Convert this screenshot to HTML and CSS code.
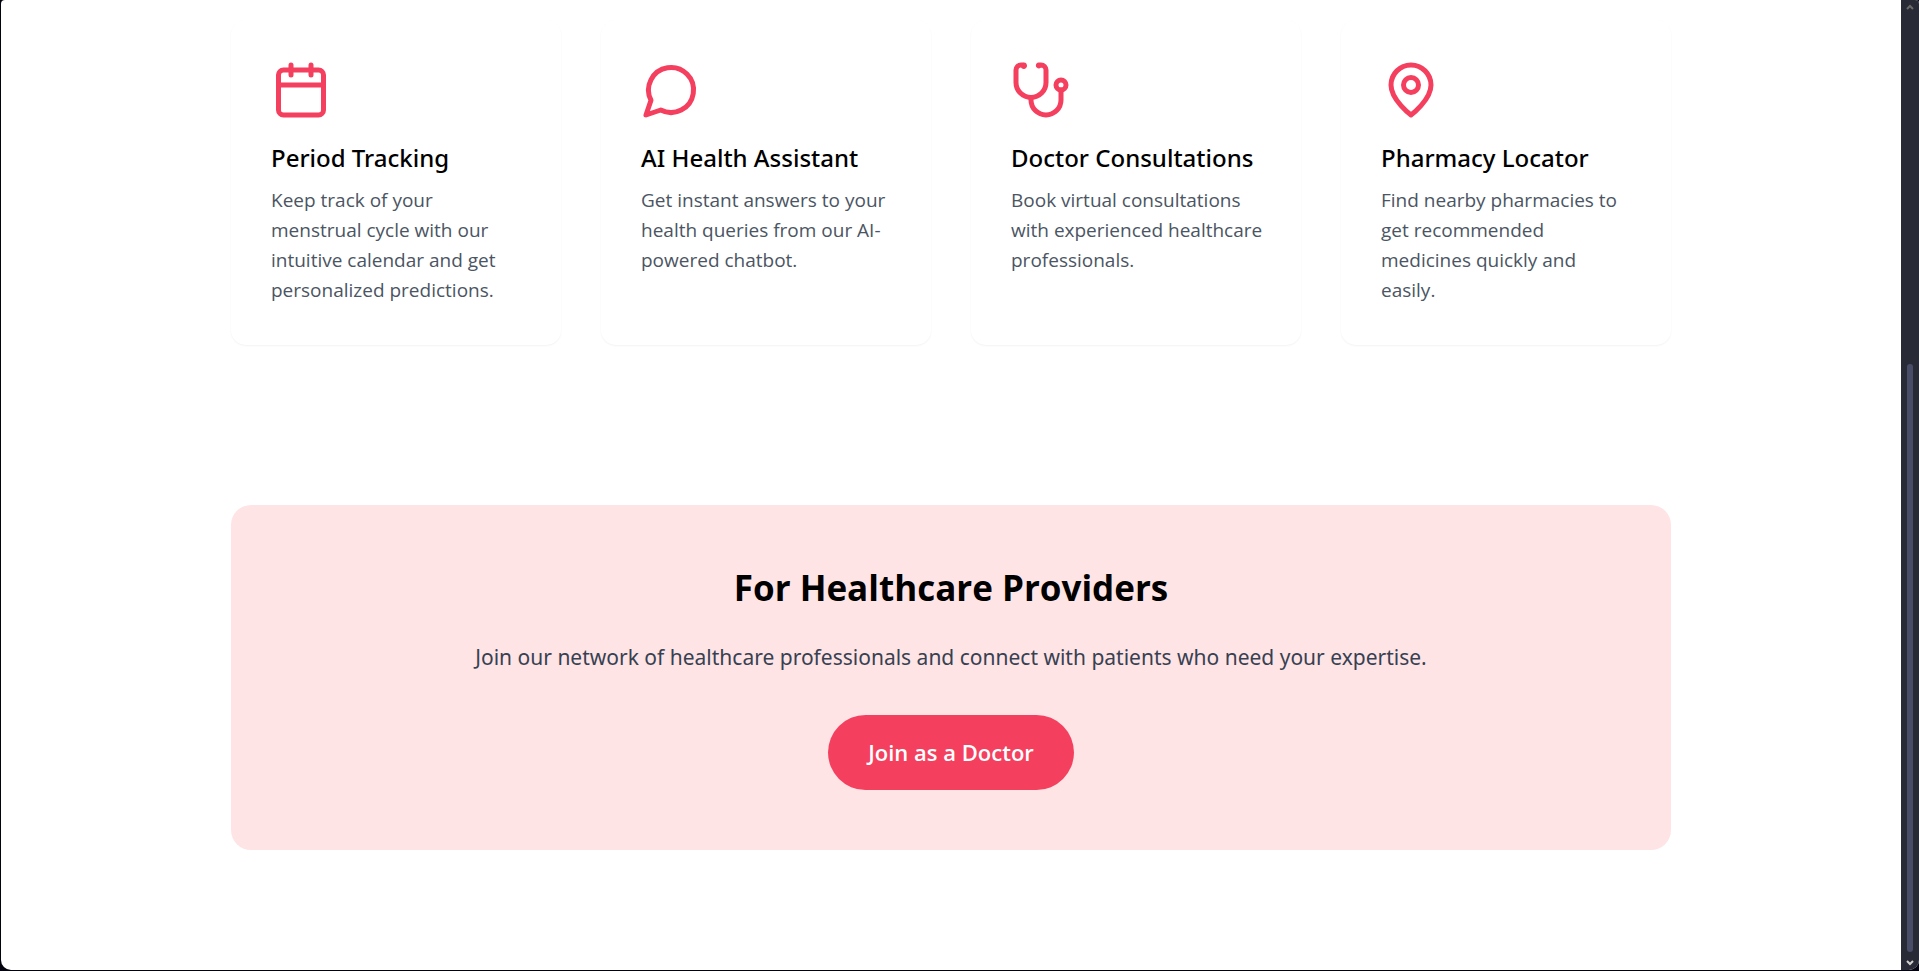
FILE: index.html
```html
<!DOCTYPE html>
<html lang="en">
  <head>
    <meta charset="UTF-8" />
    <meta name="viewport" content="width=device-width, initial-scale=1.0" />
    <title>Women's Health</title>
    <link rel="stylesheet" href="styles.css">
  </head>
  <body>
    <div class="window">
      <main class="page">
        <section class="features">
          <article class="card">
            <svg class="icon" viewBox="0 0 24 24" aria-hidden="true">
              <path d="M8 2v4" />
              <path d="M16 2v4" />
              <rect width="18" height="18" x="3" y="4" rx="2" />
              <path d="M3 10h18" />
            </svg>
            <h3>Period Tracking</h3>
            <p>
              Keep track of your menstrual cycle with our intuitive calendar and
              get personalized predictions.
            </p>
          </article>
          <article class="card">
            <svg class="icon" viewBox="0 0 24 24" aria-hidden="true">
              <path d="M7.9 20A9 9 0 1 0 4 16.1L2 22Z" />
            </svg>
            <h3>AI Health Assistant</h3>
            <p>
              Get instant answers to your health queries from our AI-powered
              chatbot.
            </p>
          </article>
          <article class="card">
            <svg class="icon" viewBox="0 0 24 24" aria-hidden="true">
              <path d="M4.8 2.3A.3.3 0 1 0 5 2H4a2 2 0 0 0-2 2v5a6 6 0 0 0 6 6 6 6 0 0 0 6-6V4a2 2 0 0 0-2-2h-1a.2.2 0 1 0 .3.3" />
              <path d="M8 15v1a6 6 0 0 0 6 6 6 6 0 0 0 6-6v-4" />
              <circle cx="20" cy="10" r="2" />
            </svg>
            <h3>Doctor Consultations</h3>
            <p>
              Book virtual consultations with experienced healthcare
              professionals.
            </p>
          </article>
          <article class="card">
            <svg class="icon" viewBox="0 0 24 24" aria-hidden="true">
              <path d="M20 10c0 6-8 12-8 12s-8-6-8-12a8 8 0 0 1 16 0Z" />
              <circle cx="12" cy="10" r="3" />
            </svg>
            <h3>Pharmacy Locator</h3>
            <p>
              Find nearby pharmacies to get recommended medicines quickly and
              easily.
            </p>
          </article>
        </section>

        <section class="providers">
          <h2>For Healthcare Providers</h2>
          <p>
            Join our network of healthcare professionals and connect with
            patients who need your expertise.
          </p>
          <button type="button" class="btn-join">Join as a Doctor</button>
        </section>
      </main>

      <div class="scrollbar" aria-hidden="true">
        <svg class="arrow arrow-up" viewBox="0 0 8 6">
          <path d="M1 5l3-3 3 3" />
        </svg>
        <div class="track">
          <div class="thumb"></div>
        </div>
        <svg class="arrow" viewBox="0 0 8 6">
          <path d="M1 1l3 3 3-3" />
        </svg>
      </div>
    </div>
  </body>
</html>
```
FILE: styles.css
```css
* {
  box-sizing: border-box;
}
body {
  margin: 0;
  padding: 0 0 1px 1px;
  background: #02030f;
  font-family: "Open Sans", "Noto Sans", sans-serif;
  color: #000;
}
h2,
h3,
p {
  margin: 0;
}
.window {
  display: flex;
  min-height: calc(100vh - 1px);
  border-radius: 4px 4px 10px 10px;
  overflow: hidden;
  background: #fff;
}
.page {
  flex: 1;
  padding: 20px 40px 100px;
}

/* Feature cards */
.features {
  display: grid;
  grid-template-columns: repeat(4, 1fr);
  gap: 40px;
  max-width: 1440px;
  margin: 0 auto 160px;
}
.card {
  padding: 40px 36px 40px 40px;
  border-radius: 15px;
  background: #fff;
  box-shadow: 0 1px 2px rgba(0, 0, 0, 0.05);
}
.icon {
  display: block;
  width: 60px;
  height: 60px;
  margin-bottom: 20px;
  fill: none;
  stroke: #f43f5e;
  stroke-width: 2;
  stroke-linecap: round;
  stroke-linejoin: round;
}
.card h3 {
  margin-bottom: 10px;
  font-family: "Noto Sans", sans-serif;
  font-size: 24px;
  font-weight: 500;
  line-height: 35px;
}
.card p {
  color: #4b5563;
  font-size: 19px;
  line-height: 30px;
}

/* Call to action for doctors */
.providers {
  max-width: 1440px;
  margin: 0 auto;
  padding: 60px;
  border-radius: 20px;
  background: #ffe4e6;
  text-align: center;
}
.providers h2 {
  margin-bottom: 30px;
  font-size: 35px;
  font-weight: 700;
  line-height: 45px;
}
.providers p {
  margin-bottom: 40px;
  color: #374151;
  font-family: "Noto Sans", sans-serif;
  font-size: 21px;
  line-height: 35px;
}
.btn-join {
  display: block;
  margin: 0 auto;
  padding: 20px 40px;
  border: none;
  border-radius: 40px;
  background: #f43f5e;
  color: #fff;
  font-family: inherit;
  font-size: 22px;
  font-weight: 600;
  line-height: 35px;
  cursor: pointer;
}
.btn-join:hover {
  background: #e11d48;
}

/* Scrollbar */
.scrollbar {
  display: flex;
  flex-direction: column;
  align-items: center;
  width: 18px;
  padding: 4px 0;
  background: #282a36;
}
.arrow {
  width: 8px;
  height: 6px;
  fill: none;
  stroke: #d0d0cc;
  stroke-width: 2;
}
.arrow-up {
  stroke: #6b6b68;
}
.track {
  display: flex;
  flex: 1;
  align-items: flex-end;
  padding: 8px 0;
}
.thumb {
  width: 6px;
  height: 63%;
  border-radius: 3px;
  background: #4a4d68;
}
```
